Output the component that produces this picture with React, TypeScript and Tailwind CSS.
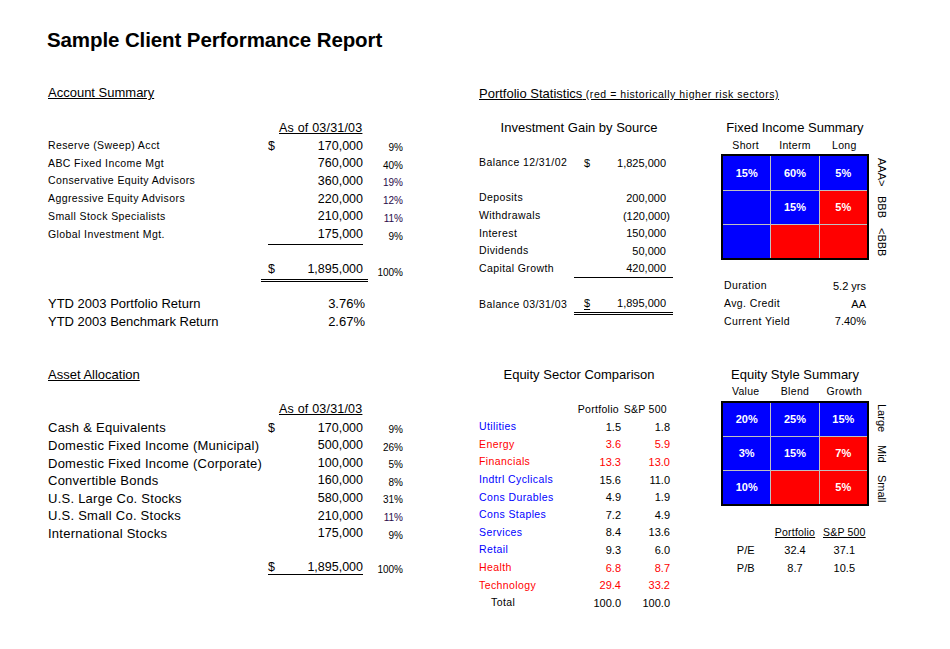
import React from "react";

const BLUE = "bg-[#0000ff]";
const RED = "bg-[#ff0000]";

type Cell = { bg: string; text?: string };

function Row({ children, className = "" }: { children?: React.ReactNode; className?: string }) {
  return <div className={`flex h-[17.6px] items-center ${className}`}>{children}</div>;
}

const label = "text-[10.5px] tracking-[0.4px] whitespace-nowrap";
const num = "text-[11px] whitespace-nowrap";

const accounts = [
  { name: "Reserve (Sweep) Acct", value: "170,000", pct: "9%", dollar: true },
  { name: "ABC Fixed Income Mgt", value: "760,000", pct: "40%" },
  { name: "Conservative Equity Advisors", value: "360,000", pct: "19%", purple: true },
  { name: "Aggressive Equity Advisors", value: "220,000", pct: "12%", purple: true },
  { name: "Small Stock Specialists", value: "210,000", pct: "11%", purple: true },
  { name: "Global Investment Mgt.", value: "175,000", pct: "9%", line: true },
];

const assets = [
  { name: "Cash & Equivalents", value: "170,000", pct: "9%", dollar: true },
  { name: "Domestic Fixed Income (Municipal)", value: "500,000", pct: "26%" },
  { name: "Domestic Fixed Income (Corporate)", value: "100,000", pct: "5%" },
  { name: "Convertible Bonds", value: "160,000", pct: "8%" },
  { name: "U.S. Large Co. Stocks", value: "580,000", pct: "31%" },
  { name: "U.S. Small Co. Stocks", value: "210,000", pct: "11%", purple: true },
  { name: "International Stocks", value: "175,000", pct: "9%" },
];

const gains = [
  { name: "Deposits", value: "200,000" },
  { name: "Withdrawals", value: "(120,000)", neg: true },
  { name: "Interest", value: "150,000" },
  { name: "Dividends", value: "50,000" },
  { name: "Capital Growth", value: "420,000", line: true },
];

const sectors = [
  { name: "Utilities", p: "1.5", s: "1.8", red: false },
  { name: "Energy", p: "3.6", s: "5.9", red: true },
  { name: "Financials", p: "13.3", s: "13.0", red: true },
  { name: "Indtrl Cyclicals", p: "15.6", s: "11.0", red: false },
  { name: "Cons Durables", p: "4.9", s: "1.9", red: false },
  { name: "Cons Staples", p: "7.2", s: "4.9", red: false },
  { name: "Services", p: "8.4", s: "13.6", red: false },
  { name: "Retail", p: "9.3", s: "6.0", red: false },
  { name: "Health", p: "6.8", s: "8.7", red: true },
  { name: "Technology", p: "29.4", s: "33.2", red: true },
];

const fixedGrid: Cell[] = [
  { bg: BLUE, text: "15%" }, { bg: BLUE, text: "60%" }, { bg: BLUE, text: "5%" },
  { bg: BLUE }, { bg: BLUE, text: "15%" }, { bg: RED, text: "5%" },
  { bg: BLUE }, { bg: RED }, { bg: RED },
];

const styleGrid: Cell[] = [
  { bg: BLUE, text: "20%" }, { bg: BLUE, text: "25%" }, { bg: BLUE, text: "15%" },
  { bg: BLUE, text: "3%" }, { bg: BLUE, text: "15%" }, { bg: RED, text: "7%" },
  { bg: BLUE, text: "10%" }, { bg: RED }, { bg: RED, text: "5%" },
];

function AccountRow({ a, big }: { a: any; big?: boolean }) {
  return (
    <div className="grid h-[17.6px] grid-cols-[220px_95px_40px] items-center">
      <span className={big ? "text-[13px] tracking-[0.25px] whitespace-nowrap" : label}>{a.name}</span>
      <span className={`flex h-full items-center justify-between text-[12.5px] ${a.line ? "border-b border-black" : ""}`}>
        <span>{a.dollar ? "$" : ""}</span>
        <span>{a.value}</span>
      </span>
      <span className={`pt-[3px] text-right text-[10px] ${a.purple ? "text-[#2a0a4a]" : ""}`}>{a.pct}</span>
    </div>
  );
}

function Heatmap({ title, cols, cells, side }: { title: string; cols: string[]; cells: Cell[]; side: string[] }) {
  return (
    <>
      <Row>
        <div className="w-[148px] text-center text-[13px] whitespace-nowrap">{title}</div>
      </Row>
      <Row>
        <div className="grid w-[148px] grid-cols-3 text-center text-[10.5px] tracking-[0.3px]">
          {cols.map((c) => (
            <span key={c}>{c}</span>
          ))}
        </div>
      </Row>
      <div className="flex h-[105.6px]">
        <div className="grid w-[148px] grid-cols-3 grid-rows-3 gap-px border-2 border-black bg-[#c0c0c0]">
          {cells.map((c, i) => (
            <div key={i} className={`flex items-center justify-center text-[11px] font-bold text-white ${c.bg}`}>
              {c.text}
            </div>
          ))}
        </div>
        <div className="ml-[4px] grid grid-rows-3">
          {side.map((s) => (
            <div key={s} className="flex items-center justify-center text-[11px] [writing-mode:vertical-rl]">
              {s}
            </div>
          ))}
        </div>
      </div>
    </>
  );
}

export default function App() {
  return (
    <div className="h-[649px] w-[950px] overflow-hidden bg-white text-black [font-family:'Liberation_Sans',Arial,sans-serif]">
      <div className="h-[84px] pl-[47px] pt-[30px]">
        <h1 className="text-[20.5px] font-bold leading-none tracking-[-0.1px]">Sample Client Performance Report</h1>
      </div>

      {/* top block */}
      <div className="flex pl-[48px]">
        <div className="w-[362px]">
          <Row>
            <span className="text-[13px] underline">Account Summary</span>
          </Row>
          <Row />
          <Row className="pl-[231px]">
            <span className="text-[12.5px] tracking-[0.2px] whitespace-nowrap underline">As of 03/31/03</span>
          </Row>
          {accounts.map((a) => (
            <AccountRow key={a.name} a={a} />
          ))}
          <Row />
          <div className="grid h-[17.6px] grid-cols-[220px_95px_40px] items-center">
            <span />
            <span className="-ml-[7px] -mr-[5px] flex h-full items-center justify-between border-b-[3px] border-double border-black pl-[7px] pr-[5px] text-[12.5px]">
              <span>$</span>
              <span>1,895,000</span>
            </span>
            <span className="pt-[3px] text-right text-[10px]">100%</span>
          </div>
          <Row />
          <Row className="w-[317px] justify-between text-[13px]">
            <span>YTD 2003 Portfolio Return</span>
            <span>3.76%</span>
          </Row>
          <Row className="w-[317px] justify-between text-[13px]">
            <span>YTD 2003 Benchmark Return</span>
            <span>2.67%</span>
          </Row>
        </div>

        <div className="ml-[69px] w-[200px]">
          <Row>
            <span className="whitespace-nowrap underline">
              <span className="text-[13px]">Portfolio Statistics</span>
              <span className="text-[10.5px] tracking-[0.55px]"> (red = historically higher risk sectors)</span>
            </span>
          </Row>
          <Row />
          <Row className="justify-center">
            <span className="text-[13px] whitespace-nowrap">Investment Gain by Source</span>
          </Row>
          <Row />
          <div className="grid h-[17.6px] grid-cols-[95px_99px] items-center">
            <span className={label}>Balance 12/31/02</span>
            <span className={`flex justify-between pl-[10px] pr-[7px] ${num}`}>
              <span>$</span>
              <span>1,825,000</span>
            </span>
          </div>
          <Row />
          {gains.map((g) => (
            <div key={g.name} className="grid h-[17.6px] grid-cols-[95px_99px] items-center">
              <span className={label}>{g.name}</span>
              <span className={`flex h-full items-center justify-end ${g.neg ? "pr-[3px]" : "pr-[7px]"} ${g.line ? "border-b border-black" : ""} ${num}`}>
                {g.value}
              </span>
            </div>
          ))}
          <Row />
          <div className="grid h-[17.6px] grid-cols-[95px_99px] items-center">
            <span className={label}>Balance 03/31/03</span>
            <span className={`flex h-full items-center justify-between border-b-[3px] border-double border-black pr-[7px] ${num}`}>
              <span className="pl-[10px] underline decoration-1 underline-offset-2">$</span>
              <span>1,895,000</span>
            </span>
          </div>
        </div>

        <div className="ml-[42px] w-[170px]">
          <Row />
          <Row />
          <Heatmap
            title="Fixed Income Summary"
            cols={["Short", "Interm", "Long"]}
            cells={fixedGrid}
            side={["AAA>", "BBB", "<BBB"]}
          />
          <Row />
          {[
            ["Duration", "5.2 yrs"],
            ["Avg. Credit", "AA"],
            ["Current Yield", "7.40%"],
          ].map(([k, v]) => (
            <Row key={k} className="w-[145px] justify-between pl-[3px]">
              <span className={label}>{k}</span>
              <span className={num}>{v}</span>
            </Row>
          ))}
        </div>
      </div>

      {/* bottom block */}
      <div className="mt-[35.2px] flex pl-[48px]">
        <div className="w-[362px]">
          <Row>
            <span className="text-[13px] underline">Asset Allocation</span>
          </Row>
          <Row />
          <Row className="pl-[231px]">
            <span className="text-[12.5px] tracking-[0.2px] whitespace-nowrap underline">As of 03/31/03</span>
          </Row>
          {assets.map((a) => (
            <AccountRow key={a.name} a={a} big />
          ))}
          <Row />
          <div className="grid h-[17.6px] grid-cols-[220px_95px_40px] items-center">
            <span />
            <span className="flex items-center justify-between border-b border-black text-[12.5px] leading-[13px]">
              <span>$</span>
              <span>1,895,000</span>
            </span>
            <span className="pt-[3px] text-right text-[10px]">100%</span>
          </div>
        </div>

        <div className="ml-[69px] w-[200px]">
          <Row className="justify-center">
            <span className="text-[13px] whitespace-nowrap">Equity Sector Comparison</span>
          </Row>
          <Row />
          <div className="grid h-[17.6px] grid-cols-[98px_42px_48px] items-center text-right text-[10.5px] tracking-[0.3px]">
            <span />
            <span>Portfolio</span>
            <span>S&amp;P 500</span>
          </div>
          {sectors.map((s) => (
            <div
              key={s.name}
              className={`grid h-[17.6px] grid-cols-[98px_44px_49px] items-center ${s.red ? "text-[#ff0000]" : ""}`}
            >
              <span className={`${label} ${s.red ? "" : "text-[#0000ff]"}`}>{s.name}</span>
              <span className={`text-right ${num}`}>{s.p}</span>
              <span className={`text-right ${num}`}>{s.s}</span>
            </div>
          ))}
          <div className="grid h-[17.6px] grid-cols-[98px_44px_49px] items-center">
            <span className={`pl-[12px] ${label}`}>Total</span>
            <span className={`text-right ${num}`}>100.0</span>
            <span className={`text-right ${num}`}>100.0</span>
          </div>
        </div>

        <div className="ml-[42px] w-[170px]">
          <Heatmap
            title="Equity Style Summary"
            cols={["Value", "Blend", "Growth"]}
            cells={styleGrid}
            side={["Large", "Mid", "Small"]}
          />
          <Row />
          <div className="grid h-[17.6px] w-[148px] grid-cols-3 items-center text-center text-[10.5px] tracking-[0.2px]">
            <span />
            <span className="underline">Portfolio</span>
            <span className="underline">S&amp;P 500</span>
          </div>
          {[
            ["P/E", "32.4", "37.1"],
            ["P/B", "8.7", "10.5"],
          ].map((r) => (
            <div key={r[0]} className="grid h-[17.6px] w-[148px] grid-cols-3 items-center text-center text-[11px]">
              {r.map((c) => (
                <span key={c}>{c}</span>
              ))}
            </div>
          ))}
        </div>
      </div>
    </div>
  );
}
